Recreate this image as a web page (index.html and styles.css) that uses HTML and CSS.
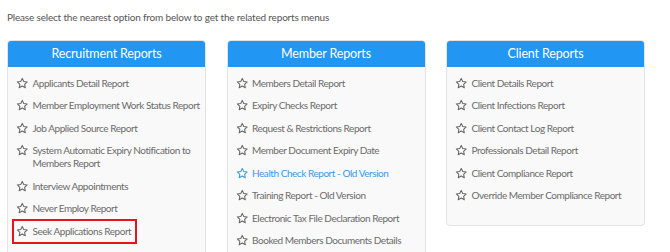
FILE: index.html
```html
<!DOCTYPE html>
<html>
<head>
<meta charset="utf-8">
<link rel="stylesheet" href="styles.css">
</head>
<body>
<svg width="0" height="0" class="defs">
  <defs>
    <symbol id="star" viewBox="0 0 24 24">
      <path d="M12 2.6l2.85 6.1 6.65.8-4.9 4.6 1.25 6.6L12 17.4l-5.85 3.3 1.25-6.6-4.9-4.6 6.65-.8z" fill="none" stroke="currentColor" stroke-width="2" stroke-linejoin="round"/>
    </symbol>
  </defs>
</svg>
<p class="intro">Please select the nearest option from below to get the related reports menus</p>
<div class="grid">
  <section class="panel">
    <h2 class="panel-head">Recruitment Reports</h2>
    <ul class="list">
      <li class="item"><svg class="star"><use href="#star"/></svg><span>Applicants Detail Report</span></li>
      <li class="item"><svg class="star"><use href="#star"/></svg><span>Member Employment Work Status Report</span></li>
      <li class="item"><svg class="star"><use href="#star"/></svg><span>Job Applied Source Report</span></li>
      <li class="item"><svg class="star"><use href="#star"/></svg><span>System Automatic Expiry Notification to Members Report</span></li>
      <li class="item"><svg class="star"><use href="#star"/></svg><span>Interview Appointments</span></li>
      <li class="item"><svg class="star"><use href="#star"/></svg><span>Never Employ Report</span></li>
      <li class="item highlight"><svg class="star"><use href="#star"/></svg><span>Seek Applications Report</span></li>
    </ul>
  </section>
  <section class="panel">
    <h2 class="panel-head">Member Reports</h2>
    <ul class="list">
      <li class="item"><svg class="star"><use href="#star"/></svg><span>Members Detail Report</span></li>
      <li class="item"><svg class="star"><use href="#star"/></svg><span>Expiry Checks Report</span></li>
      <li class="item"><svg class="star"><use href="#star"/></svg><span>Request &amp; Restrictions Report</span></li>
      <li class="item"><svg class="star"><use href="#star"/></svg><span>Member Document Expiry Date</span></li>
      <li class="item active"><svg class="star"><use href="#star"/></svg><span>Health Check Report - Old Version</span></li>
      <li class="item"><svg class="star"><use href="#star"/></svg><span>Training Report - Old Version</span></li>
      <li class="item"><svg class="star"><use href="#star"/></svg><span>Electronic Tax File Declaration Report</span></li>
      <li class="item"><svg class="star"><use href="#star"/></svg><span>Booked Members Documents Details</span></li>
    </ul>
  </section>
  <section class="panel">
    <h2 class="panel-head">Client Reports</h2>
    <ul class="list">
      <li class="item"><svg class="star"><use href="#star"/></svg><span>Client Details Report</span></li>
      <li class="item"><svg class="star"><use href="#star"/></svg><span>Client Infections Report</span></li>
      <li class="item"><svg class="star"><use href="#star"/></svg><span>Client Contact Log Report</span></li>
      <li class="item"><svg class="star"><use href="#star"/></svg><span>Professionals Detail Report</span></li>
      <li class="item"><svg class="star"><use href="#star"/></svg><span>Client Compliance Report</span></li>
      <li class="item"><svg class="star"><use href="#star"/></svg><span>Override Member Compliance Report</span></li>
    </ul>
  </section>
</div>
</body>
</html>
```
FILE: styles.css
```css
* { box-sizing: border-box; }
html, body { margin: 0; padding: 0; background: #fff; }
body {
  font-family: Lato, "Open Sans", sans-serif;
  color: #666;
  padding: 10px 7px 0 7px;
  overflow: hidden;
}
.defs { position: absolute; width: 0; height: 0; }
.intro {
  margin: 0;
  font-size: 10px;
  letter-spacing: -0.18px;
  line-height: 14px;
  color: #555;
}
.grid {
  display: grid;
  grid-template-columns: repeat(3, 199px);
  column-gap: 20.5px;
  align-items: start;
  margin-top: 16px;
}
.panel {
  background: #f9f9f9;
  border: 1px solid #e4e4e4;
  border-radius: 4px;
  overflow: hidden;
}
.panel-head {
  margin: -1px -1px 0 -1px;
  height: 27px;
  background: #2196f3;
  color: #fff;
  font-weight: normal;
  font-size: 12.5px;
  letter-spacing: -0.15px;
  line-height: 27px;
  text-align: center;
  border-radius: 4px 4px 0 0;
}
.list {
  list-style: none;
  margin: 0;
  padding: 5px 0 18px 0;
}
.item {
  display: flex;
  align-items: flex-start;
  gap: 4px;
  padding: 4.75px 0 4.75px 8px;
  font-size: 10px;
  letter-spacing: -0.45px;
  line-height: 13px;
  color: #6b6b6b;
}
.star {
  flex: none;
  width: 12.5px;
  height: 12.5px;
  color: #666;
}
.item.active, .item.active .star { color: #3a98ea; }
.item.highlight {
  width: max-content;
  white-space: nowrap;
  margin-left: 5px;
  padding-left: 3px;
  padding-right: 5px;
  outline: 2px solid #e8141b;
  outline-offset: -1px;
}
```
